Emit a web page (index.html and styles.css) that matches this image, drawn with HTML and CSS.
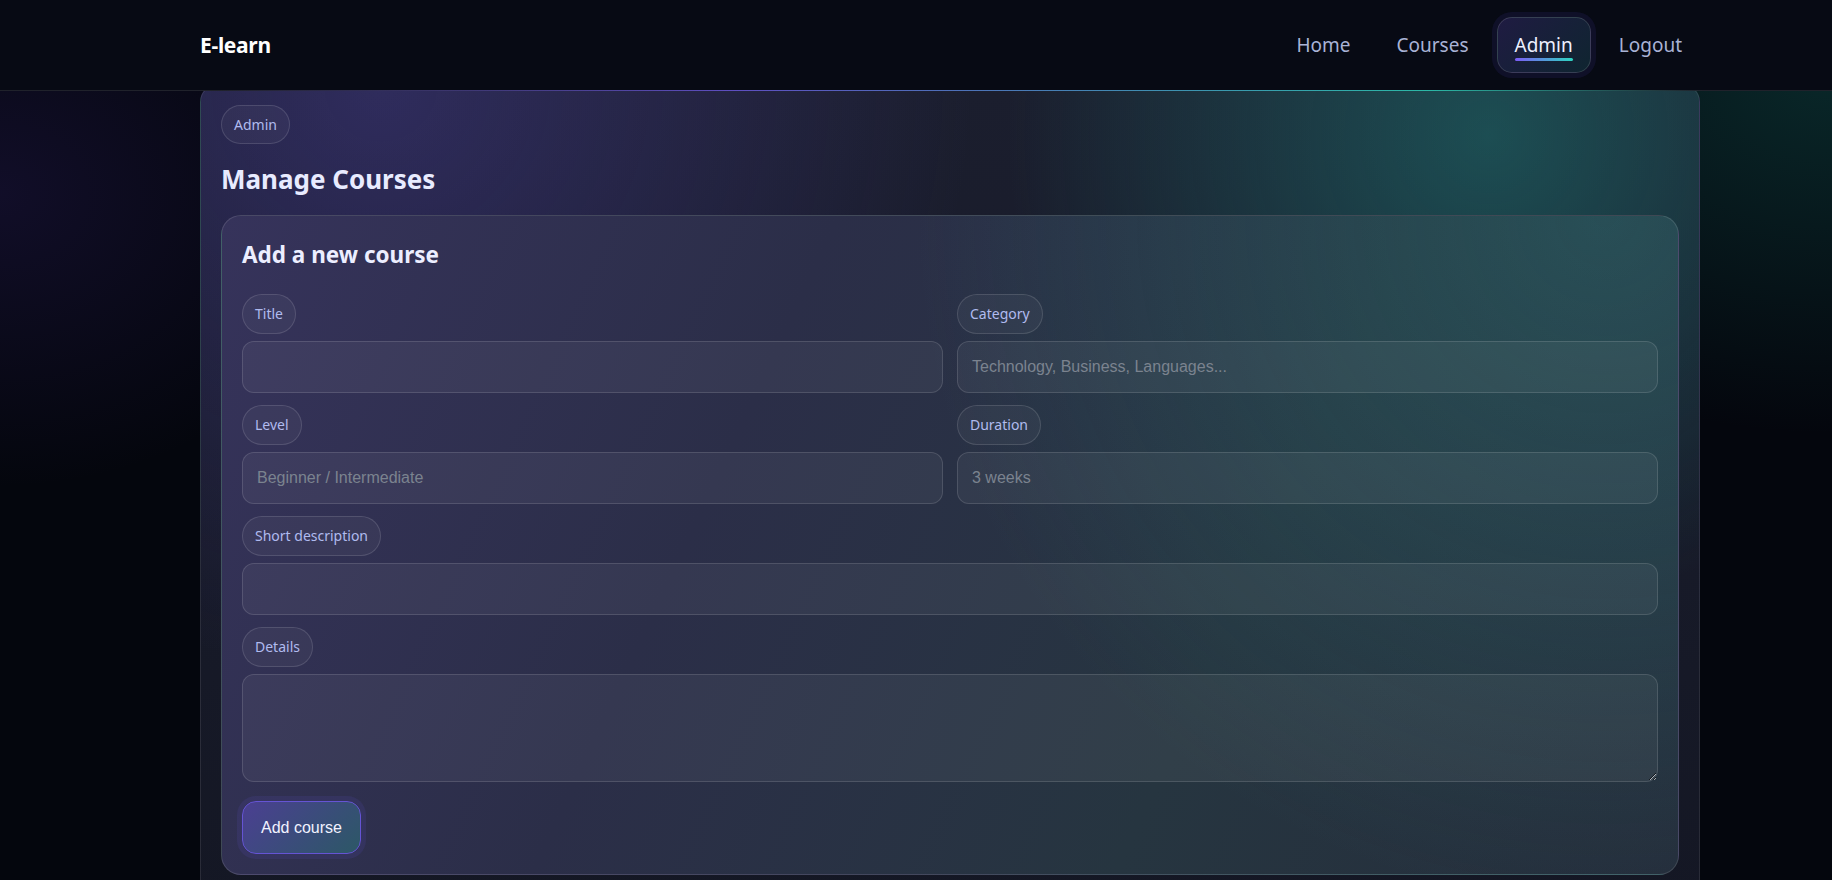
FILE: index.html
```html
<!DOCTYPE html>
<html lang="en">
<head>
    <meta charset="UTF-8">
    <meta name="viewport" content="width=device-width, initial-scale=1.0">
    <title>E-learn | Admin</title>
    <link rel="stylesheet" href="styles.css">
</head>
<body>
    <header class="topbar">
        <div class="wrap topbar-inner">
            <a class="brand" href="#">E-learn</a>
            <nav class="nav">
                <a href="#">Home</a>
                <a href="#">Courses</a>
                <a href="#" class="active">Admin</a>
                <a href="#">Logout</a>
            </nav>
        </div>
    </header>

    <main class="wrap page">
        <section class="panel">
            <span class="pill">Admin</span>
            <h1>Manage Courses</h1>

            <!-- New course form -->
            <div class="form-card">
                <h2>Add a new course</h2>
                <form class="course-form">
                    <div class="grid">
                        <div class="field">
                            <label class="pill" for="title">Title</label>
                            <input type="text" id="title">
                        </div>
                        <div class="field">
                            <label class="pill" for="category">Category</label>
                            <input type="text" id="category" placeholder="Technology, Business, Languages...">
                        </div>
                        <div class="field">
                            <label class="pill" for="level">Level</label>
                            <input type="text" id="level" placeholder="Beginner / Intermediate">
                        </div>
                        <div class="field">
                            <label class="pill" for="duration">Duration</label>
                            <input type="text" id="duration" placeholder="3 weeks">
                        </div>
                        <div class="field full">
                            <label class="pill" for="short">Short description</label>
                            <input type="text" id="short">
                        </div>
                        <div class="field full">
                            <label class="pill" for="details">Details</label>
                            <textarea id="details"></textarea>
                        </div>
                    </div>
                    <button type="button" class="btn">Add course</button>
                </form>
            </div>
        </section>
    </main>
</body>
</html>
```

FILE: styles.css
```css
* {
    box-sizing: border-box;
}
html, body {
    height: 100%;
}
body {
    margin: 0;
    font-family: "Noto Sans", "Open Sans", sans-serif;
    color: #e6e9ff;
    background:
        radial-gradient(520px 420px at 0% 22%, rgba(70, 45, 150, 0.2), transparent 70%),
        radial-gradient(700px 520px at 100% 8%, rgba(20, 110, 100, 0.32), transparent 70%),
        #04060d;
    overflow: hidden;
}
.wrap {
    width: 1500px;
    margin-left: 200px;
}

/* Top bar */
.topbar {
    position: sticky;
    top: 0;
    z-index: 10;
    height: 91px;
    background: #070a14;
    border-bottom: 1px solid rgba(255, 255, 255, 0.1);
}
.topbar::after {
    content: "";
    position: absolute;
    left: 0;
    right: 0;
    bottom: -1px;
    height: 1px;
    background: linear-gradient(90deg, transparent 12%, rgba(110, 90, 230, 0.8) 40%, rgba(45, 200, 180, 0.9) 78%, transparent 93%);
}
.topbar-inner {
    height: 100%;
    display: flex;
    align-items: center;
    justify-content: space-between;
}
.brand {
    color: #fff;
    text-decoration: none;
    font-weight: 700;
    font-size: 21px;
    letter-spacing: -0.3px;
}
.nav {
    display: flex;
    gap: 10px;
}
.nav a {
    position: relative;
    padding: 15px 17px;
    color: #a9b3d6;
    text-decoration: none;
    font-size: 19px;
    line-height: 24px;
    border: 1px solid transparent;
    border-radius: 15px;
}
.nav a.active {
    color: #eef0ff;
    background: linear-gradient(135deg, #1f1b42, #0f2530);
    border-color: rgba(255, 255, 255, 0.14);
    box-shadow: 0 0 0 5px rgba(60, 50, 150, 0.16);
}
.nav a.active::after {
    content: "";
    position: absolute;
    left: 17px;
    right: 17px;
    bottom: 11px;
    height: 3px;
    border-radius: 2px;
    background: linear-gradient(90deg, #7b5cf5, #2dd4bf);
}

/* Content */
.page {
    margin-top: -7px;
}
.panel {
    padding: 20px 20px 40px;
    border: 1px solid rgba(255, 255, 255, 0.09);
    border-radius: 18px;
    background:
        radial-gradient(circle at 86% 6%, rgba(30, 125, 120, 0.5), transparent 32%),
        radial-gradient(circle at 12% 0%, rgba(85, 70, 180, 0.35), transparent 38%),
        linear-gradient(180deg, #1b1e2e, #141724);
}
.pill {
    display: inline-block;
    padding: 9px 12px;
    font-size: 14px;
    line-height: 19px;
    color: #b0bbef;
    background: rgba(255, 255, 255, 0.04);
    border: 1px solid rgba(255, 255, 255, 0.13);
    border-radius: 999px;
}
.panel h1 {
    margin: 18px 0 19px;
    font-size: 26px;
    line-height: 34px;
    font-weight: 700;
    color: #e8ebff;
}
.form-card {
    padding: 24px 20px 20px;
    border: 1px solid rgba(255, 255, 255, 0.12);
    border-radius: 20px;
    background:
        radial-gradient(circle at 95% 0%, rgba(45, 130, 130, 0.35), transparent 45%),
        linear-gradient(115deg, #36335b 0%, #2b2e48 35%, #263540 68%, #252e3c 100%);
}
.form-card h2 {
    margin: 0 0 24px;
    font-size: 22.5px;
    line-height: 30px;
    font-weight: 700;
    color: #eceeff;
}
.grid {
    display: grid;
    grid-template-columns: 1fr 1fr;
    column-gap: 14px;
    row-gap: 12px;
}
.field {
    display: flex;
    flex-direction: column;
    align-items: flex-start;
    gap: 7px;
}
.field .pill {
    line-height: 20px;
}
.field.full {
    grid-column: 1 / -1;
}
.field input,
.field textarea {
    width: 100%;
    height: 52px;
    padding: 0 14px;
    font-family: "Liberation Sans", Arial, sans-serif;
    font-size: 16px;
    color: #e6e9ff;
    background: rgba(255, 255, 255, 0.05);
    border: 1px solid rgba(255, 255, 255, 0.13);
    border-radius: 12px;
    outline: none;
}
.field textarea {
    height: 108px;
    padding: 14px;
    resize: vertical;
}
.field input::placeholder {
    color: #7b838f;
}
.btn {
    margin-top: 19px;
    padding: 16px 18px;
    font-family: "Liberation Sans", Arial, sans-serif;
    font-size: 16px;
    line-height: 19px;
    color: #f1f2ff;
    background: linear-gradient(135deg, #4b3f92, #2c5866);
    border: 1px solid #6554d4;
    border-radius: 14px;
    box-shadow: 0 0 0 5px rgba(90, 75, 200, 0.14);
    cursor: pointer;
}
```
